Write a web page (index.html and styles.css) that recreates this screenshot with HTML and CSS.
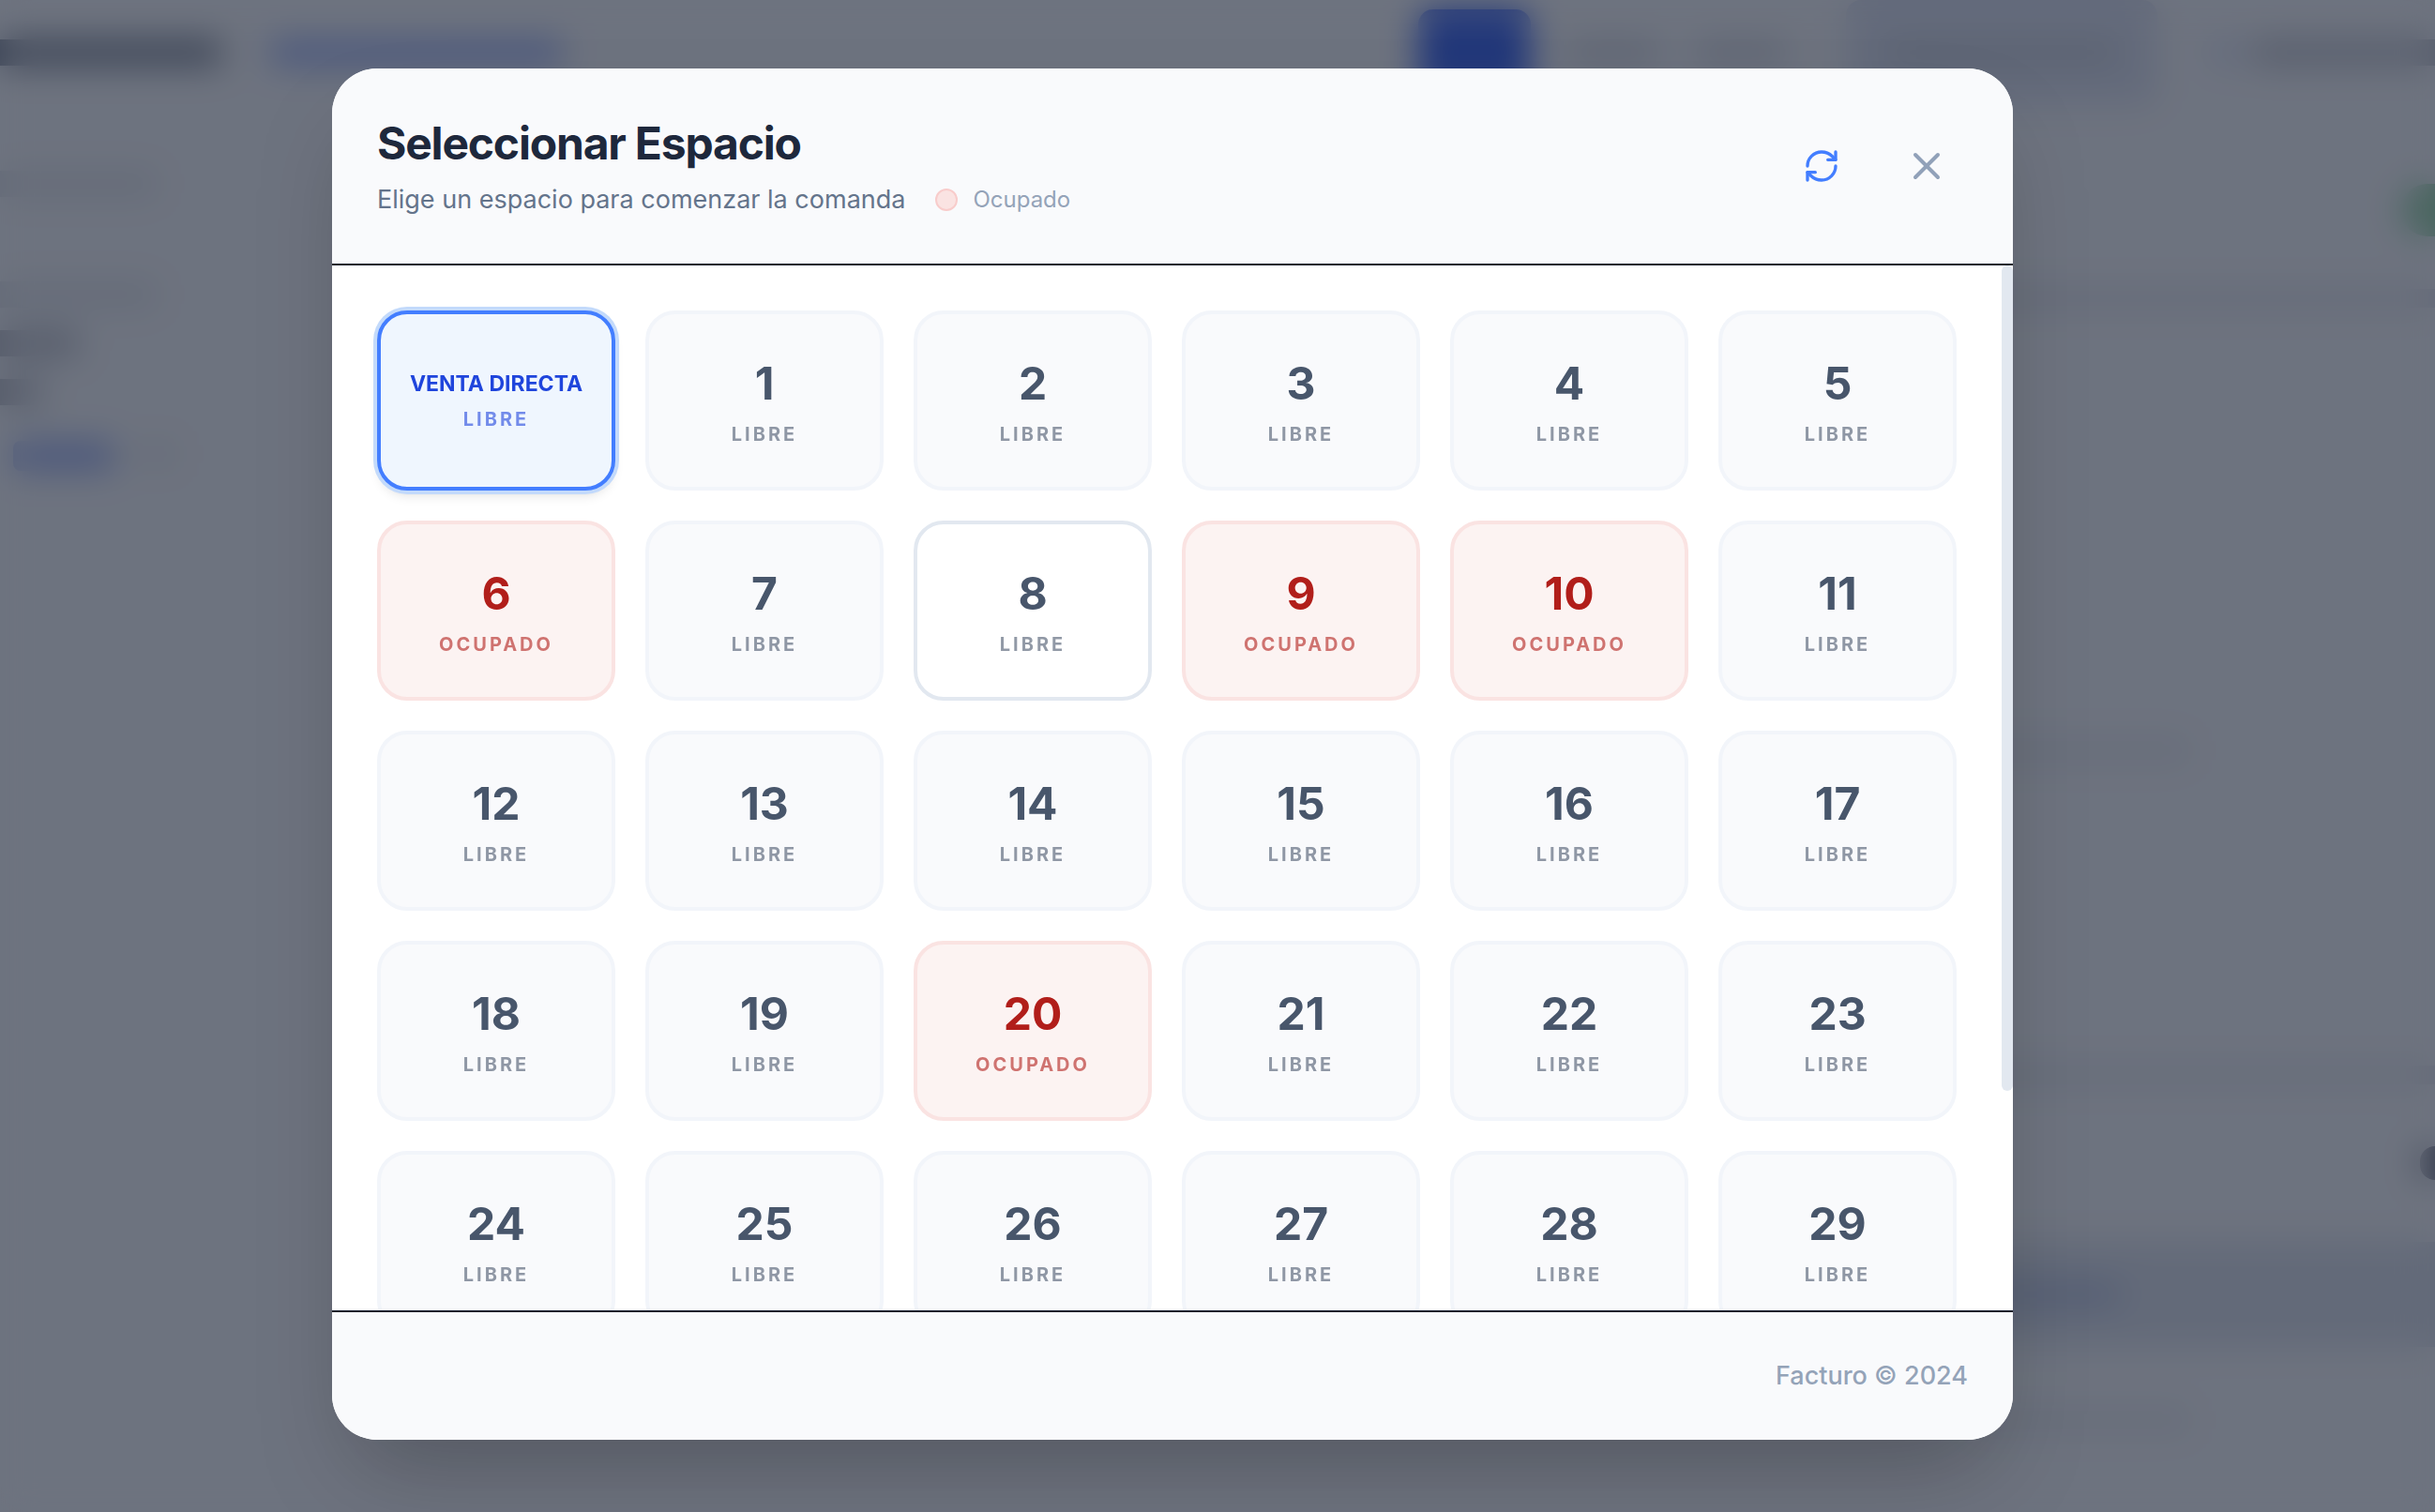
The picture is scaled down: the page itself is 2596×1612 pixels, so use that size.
FILE: index.html
```html
<!DOCTYPE html>
<html lang="es">
<head>
<meta charset="utf-8">
<meta name="viewport" content="width=device-width, initial-scale=1">
<title>Seleccionar Espacio</title>
<link rel="stylesheet" href="styles.css">
</head>
<body>
<div class="app" aria-hidden="true">
  <div class="topbar">
    <span class="ph ph-title"></span>
    <span class="ph ph-link"></span>
    <div class="topbar-actions">
      <span class="tab-active"></span>
      <span class="ph ph-tab"></span>
      <span class="ph ph-tab"></span>
      <span class="search"><span class="ph ph-search"></span></span>
      <span class="user"><span class="ph ph-icon"></span><span class="ph ph-user"></span></span>
    </div>
  </div>
  <div class="columns">
    <div class="orders">
      <div class="orders-head"><span class="ph ph-faint"></span></div>
      <div class="order">
        <span class="ph ph-faint"></span>
        <span class="ph ph-name"></span>
        <span class="ph ph-name short"></span>
        <div class="order-tags"><span class="ph ph-pill"></span><span class="ph ph-count"></span></div>
      </div>
    </div>
    <div class="cart">
      <div class="cart-head"><span class="status"></span></div>
      <div class="cart-body"><span class="ph ph-hint"></span></div>
      <div class="cart-total"><span class="amount"></span></div>
      <div class="cart-pay"><span class="ph ph-pay"></span></div>
      <div class="cart-foot"><span class="ph ph-hint"></span></div>
    </div>
  </div>
</div>

<div class="overlay">
  <section class="modal" role="dialog" aria-modal="true" aria-labelledby="modal-title">
    <header class="modal-header">
      <div>
        <h2 class="modal-title" id="modal-title">Seleccionar Espacio</h2>
        <div class="modal-sub">
          <p class="modal-text">Elige un espacio para comenzar la comanda</p>
          <span class="legend"><span class="legend-dot"></span>Ocupado</span>
        </div>
      </div>
      <div class="modal-actions">
        <button class="icon-btn refresh" type="button" aria-label="Actualizar">
          <svg width="40" height="40" viewBox="0 0 24 24" fill="none" stroke="currentColor" stroke-width="2" stroke-linecap="round" stroke-linejoin="round"><path d="M3 12a9 9 0 0 1 9-9 9.75 9.75 0 0 1 6.74 2.74L21 8"/><path d="M21 3v5h-5"/><path d="M21 12a9 9 0 0 1-9 9 9.75 9.75 0 0 1-6.74-2.74L3 16"/><path d="M8 16H3v5"/></svg>
        </button>
        <button class="icon-btn close" type="button" aria-label="Cerrar">
          <svg width="48" height="48" viewBox="0 0 24 24" fill="none" stroke="currentColor" stroke-width="2" stroke-linecap="round" stroke-linejoin="round"><path d="M18 6 6 18"/><path d="m6 6 12 12"/></svg>
        </button>
      </div>
    </header>
    <div class="modal-body">
      <div class="spaces-scroll">
        <div class="spaces">
          <button class="space selected" type="button"><span class="space-name">VENTA DIRECTA</span><span class="space-state">LIBRE</span></button>
          <button class="space" type="button"><span class="space-num">1</span><span class="space-state">LIBRE</span></button>
          <button class="space" type="button"><span class="space-num">2</span><span class="space-state">LIBRE</span></button>
          <button class="space" type="button"><span class="space-num">3</span><span class="space-state">LIBRE</span></button>
          <button class="space" type="button"><span class="space-num">4</span><span class="space-state">LIBRE</span></button>
          <button class="space" type="button"><span class="space-num">5</span><span class="space-state">LIBRE</span></button>
          <button class="space busy" type="button"><span class="space-num">6</span><span class="space-state">OCUPADO</span></button>
          <button class="space" type="button"><span class="space-num">7</span><span class="space-state">LIBRE</span></button>
          <button class="space active" type="button"><span class="space-num">8</span><span class="space-state">LIBRE</span></button>
          <button class="space busy" type="button"><span class="space-num">9</span><span class="space-state">OCUPADO</span></button>
          <button class="space busy" type="button"><span class="space-num">10</span><span class="space-state">OCUPADO</span></button>
          <button class="space" type="button"><span class="space-num">11</span><span class="space-state">LIBRE</span></button>
          <button class="space" type="button"><span class="space-num">12</span><span class="space-state">LIBRE</span></button>
          <button class="space" type="button"><span class="space-num">13</span><span class="space-state">LIBRE</span></button>
          <button class="space" type="button"><span class="space-num">14</span><span class="space-state">LIBRE</span></button>
          <button class="space" type="button"><span class="space-num">15</span><span class="space-state">LIBRE</span></button>
          <button class="space" type="button"><span class="space-num">16</span><span class="space-state">LIBRE</span></button>
          <button class="space" type="button"><span class="space-num">17</span><span class="space-state">LIBRE</span></button>
          <button class="space" type="button"><span class="space-num">18</span><span class="space-state">LIBRE</span></button>
          <button class="space" type="button"><span class="space-num">19</span><span class="space-state">LIBRE</span></button>
          <button class="space busy" type="button"><span class="space-num">20</span><span class="space-state">OCUPADO</span></button>
          <button class="space" type="button"><span class="space-num">21</span><span class="space-state">LIBRE</span></button>
          <button class="space" type="button"><span class="space-num">22</span><span class="space-state">LIBRE</span></button>
          <button class="space" type="button"><span class="space-num">23</span><span class="space-state">LIBRE</span></button>
          <button class="space" type="button"><span class="space-num">24</span><span class="space-state">LIBRE</span></button>
          <button class="space" type="button"><span class="space-num">25</span><span class="space-state">LIBRE</span></button>
          <button class="space" type="button"><span class="space-num">26</span><span class="space-state">LIBRE</span></button>
          <button class="space" type="button"><span class="space-num">27</span><span class="space-state">LIBRE</span></button>
          <button class="space" type="button"><span class="space-num">28</span><span class="space-state">LIBRE</span></button>
          <button class="space" type="button"><span class="space-num">29</span><span class="space-state">LIBRE</span></button>
        </div>
      </div>
      <div class="scroll-track" aria-hidden="true"><div class="scroll-thumb" style="height: 79%"></div></div>
    </div>
    <footer class="modal-footer">Facturo © 2024</footer>
  </section>
</div>
</body>
</html>
```

FILE: styles.css
```css
* {
  box-sizing: border-box;
}

body {
  margin: 0;
  height: 100vh;
  overflow: hidden;
  background: #fbfcfe;
  font-family: Inter, "Liberation Sans", sans-serif;
}

/* Page behind the dialog */
.app {
  display: flex;
  flex-direction: column;
  height: 100%;
}

.ph {
  display: block;
  flex: none;
  height: 28px;
  border-radius: 8px;
}

.topbar {
  display: flex;
  align-items: center;
  gap: 52px;
  height: 112px;
}

.ph-title {
  width: 236px;
  border-radius: 0 8px 8px 0;
  background: #828a9a;
}

.ph-link { width: 312px; background: #a4b8fa; }

.topbar-actions {
  display: flex;
  align-items: center;
  gap: 40px;
  height: 100%;
  margin-left: auto;
}

.tab-active {
  width: 120px;
  height: 92px;
  border-radius: 16px;
  background: #4069f2;
}

.ph-tab { width: 96px; background: #dadde4; }

.search {
  display: flex;
  align-items: center;
  justify-content: center;
  width: 332px;
  height: 100%;
  margin-left: 24px;
  border-radius: 16px;
  background: #e2e7f5;
}

.ph-search { width: 248px; background: #d0d5df; }

.user {
  display: flex;
  gap: 16px;
  margin-left: 20px;
}

.ph-icon { width: 24px; background: #d5def8; }

.ph-user {
  width: 196px;
  border-radius: 8px 0 0 8px;
  background: #c6c9d2;
}

.columns {
  display: flex;
  flex: 1;
  justify-content: space-between;
}

.orders { width: 272px; }

.orders-head { padding: 70px 0 66px; }

.ph-faint {
  width: 168px;
  border-radius: 0 8px 8px 0;
  background: #e6e9ee;
}

.order {
  display: flex;
  flex-direction: column;
  gap: 24px;
  padding-top: 24px;
}

.ph-name {
  width: 84px;
  border-radius: 0 8px 8px 0;
  background: #bfc2cb;
}

.ph-name.short { width: 44px; }

.order-tags {
  display: flex;
  gap: 24px;
  padding: 14px;
}

.ph-pill { width: 108px; height: 32px; background: #a6b8f6; }
.ph-count { width: 44px; background: #eceef2; }

.cart {
  display: flex;
  flex-direction: column;
  width: 496px;
}

.cart-head {
  display: flex;
  align-items: center;
  justify-content: flex-end;
  height: 216px;
  padding-top: 28px;
  border-bottom: 20px solid #e4e6ee;
}

.status {
  width: 36px;
  height: 56px;
  border-radius: 28px 0 0 28px;
  background: #a0dbb0;
}

.cart-body {
  display: flex;
  flex: 1;
  align-items: center;
  padding-top: 136px;
  border-bottom: 20px solid #e6e8ef;
}

.ph-hint { width: 236px; background: #eceef3; }

.cart-total {
  display: flex;
  align-items: center;
  justify-content: flex-end;
  height: 168px;
}

.amount {
  width: 16px;
  height: 36px;
  border-radius: 16px 0 0 16px;
  background: #6c7080;
}

.cart-pay {
  display: flex;
  align-items: center;
  height: 112px;
  background: #e1e6f0;
}

.ph-pay { width: 160px; background: #c0cae4; }

.cart-foot {
  height: 176px;
  padding-top: 64px;
}

/* Dialog */
.overlay {
  position: fixed;
  inset: 0;
  display: flex;
  align-items: center;
  justify-content: center;
  padding: 73px 96px 77px 0;
  background: rgba(15, 23, 42, 0.6);
  backdrop-filter: blur(18px);
}

.modal {
  display: flex;
  flex-direction: column;
  width: 100%;
  max-width: 1792px;
  height: 100%;
  overflow: hidden;
  border-radius: 48px;
  background: #fff;
  box-shadow: 0 50px 100px -24px rgba(0, 0, 0, 0.25);
}

.modal-header {
  display: flex;
  flex: none;
  align-items: center;
  justify-content: space-between;
  padding: 48px;
  border-bottom: 2px solid #0f172b;
  background: #f9fafc;
}

.modal-title {
  margin: 0 0 8px;
  color: #1e283c;
  font-size: 48px;
  font-weight: 700;
  line-height: 64px;
  letter-spacing: -0.025em;
}

.modal-sub {
  display: flex;
  align-items: center;
  gap: 32px;
}

.modal-text {
  margin: 0;
  color: #64748b;
  font-size: 27px;
  line-height: 40px;
}

.legend {
  display: flex;
  align-items: center;
  gap: 16px;
  color: #94a3b8;
  font-size: 24px;
  line-height: 32px;
}

.legend-dot {
  width: 24px;
  height: 24px;
  border: 2px solid #f8cccb;
  border-radius: 50%;
  background: #fae3e2;
}

.modal-actions {
  display: flex;
  gap: 24px;
}

.icon-btn {
  display: flex;
  align-items: center;
  justify-content: center;
  width: 88px;
  height: 88px;
  padding: 0;
  border: 0;
  border-radius: 50%;
  background: none;
  cursor: pointer;
}

.refresh { color: #437eff; }
.close { color: #91a1b9; }

.modal-body {
  display: flex;
  flex: 1;
  min-height: 0;
}

.spaces-scroll {
  flex: 1;
  padding: 48px;
  overflow-y: auto;
  scrollbar-width: none;
}

.scroll-track {
  flex: none;
  width: 12px;
}

.scroll-thumb {
  border-radius: 6px;
  background: #e2e8f0;
}

.spaces {
  display: grid;
  grid-template-columns: repeat(6, 1fr);
  gap: 32px;
}

.space {
  display: flex;
  flex-direction: column;
  align-items: center;
  justify-content: center;
  gap: 8px;
  height: 192px;
  padding: 0;
  border: 4px solid #f2f5fa;
  border-radius: 32px;
  background: #f9fafc;
  color: #48566b;
  font-family: inherit;
  cursor: pointer;
}

.space-num {
  font-size: 48px;
  font-weight: 700;
  line-height: 64px;
}

.space-name {
  font-size: 23px;
  font-weight: 700;
  line-height: 32px;
}

.space-state {
  font-size: 20px;
  font-weight: 700;
  line-height: 28px;
  letter-spacing: 3px;
  opacity: 0.6;
}

.space.active {
  border-color: #e2e8f0;
  background: #fff;
}

.space.busy {
  border-color: #fae3e2;
  background: #fcf3f2;
  color: #b11e1a;
}

.space.selected {
  border-color: #437eff;
  background: #eff6fe;
  color: #1f45dc;
  box-shadow: 0 0 0 4px #c3dafb, 0 8px 12px -2px rgba(0, 0, 0, 0.1), 0 4px 8px -4px rgba(0, 0, 0, 0.1);
}

.modal-footer {
  flex: none;
  padding: 48px;
  border-top: 2px solid #0f172b;
  background: #f9fafc;
  color: #94a3b8;
  font-size: 27px;
  font-weight: 500;
  line-height: 40px;
  text-align: right;
}
```
